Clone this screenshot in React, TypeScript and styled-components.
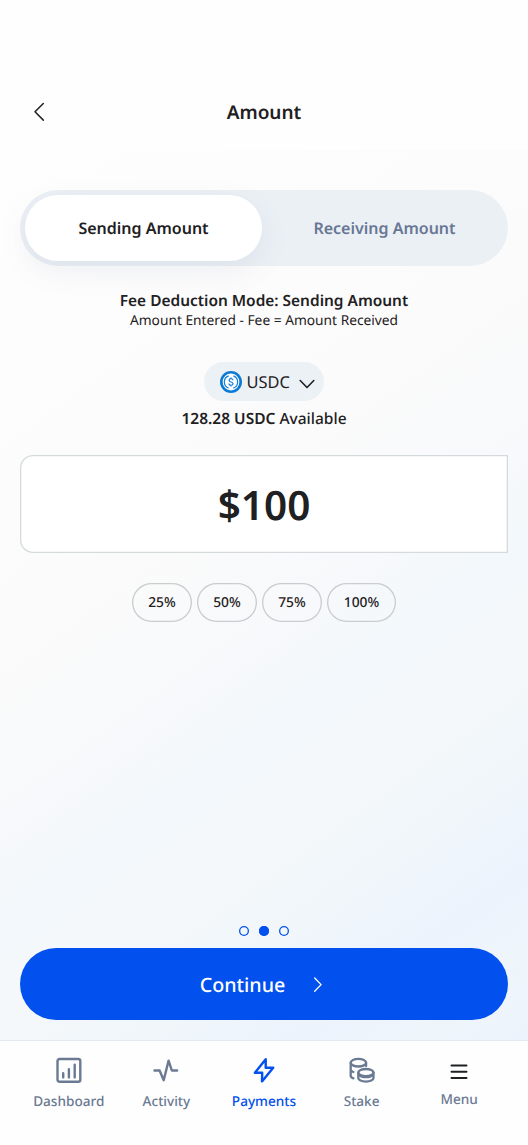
import React from "react";
import styled, { createGlobalStyle } from "styled-components";

const GlobalStyle = createGlobalStyle`
  * { box-sizing: border-box; }
  body { margin: 0; background: #fff; font-family: "Noto Sans", sans-serif; color: #1e2022; text-rendering: geometricPrecision; }
  button { font: inherit; color: inherit; background: none; border: 0; padding: 0; margin: 0; text-rendering: inherit; }
  svg { display: block; flex: none; }
`;

const Screen = styled.div`
  width: 528px;
  height: 1145px;
  display: flex;
  flex-direction: column;
  overflow: hidden;
  background: linear-gradient(144deg, #fefefe 12%, #fcfcfc 30%, #fbfbfb 42%, #f8f9fb 53%, #f2f8fc 61%, #f5f8fb 66%, #f0f6fa 75%, #ecf3fd 82%, #eef5fa 88%, #ebf2fd 95%);
`;

const Header = styled.header`
  height: 150px;
  padding: 73px 20px 0;
  display: grid;
  grid-template-columns: 40px 1fr 40px;
  align-items: center;
  background: #fefefe;
`;

const BackButton = styled.button`
  display: flex;
  padding-left: 13px;
`;

const Title = styled.h1`
  margin: 0;
  text-align: center;
  font-size: 19px;
  font-weight: 600;
  line-height: 26px;
`;

const Content = styled.main`
  flex: 1;
  display: flex;
  flex-direction: column;
  align-items: center;
  padding: 40px 20px 20px;
`;

const Segmented = styled.div`
  width: 100%;
  height: 76px;
  padding: 5px;
  display: grid;
  grid-template-columns: 1fr 1fr;
  gap: 4px;
  border-radius: 38px;
  background: #ebf0f5;
`;

const Segment = styled.button<{ $active?: boolean }>`
  height: 66px;
  border-radius: 33px;
  font-size: 16px;
  font-weight: 600;
  color: ${(p) => (p.$active ? "#1e2022" : "#687794")};
  background: ${(p) => (p.$active ? "#fff" : "transparent")};
  box-shadow: ${(p) => (p.$active ? "0 10px 30px rgba(92, 104, 148, 0.09)" : "none")};
`;

const ModeTitle = styled.p`
  margin: 24px 0 0;
  font-size: 15.45px;
  font-weight: 600;
  line-height: 20px;
`;

const ModeText = styled.p`
  margin: 1px 0 0;
  font-size: 13.75px;
  line-height: 20px;
`;

const CurrencyButton = styled.button`
  margin-top: 31px;
  width: 120px;
  height: 39px;
  padding: 0 9.5px 0 15.5px;
  display: flex;
  align-items: center;
  border-radius: 20px;
  background: #ebf1f5;
  font-size: 16.4px;
`;

const CurrencyName = styled.span`
  margin: 0 0 0 5px;
  flex: 1;
  text-align: left;
`;

const Chevron = styled.svg`
  margin-top: 4px;
`;

const Available = styled.p`
  margin: 6px 0 1px;
  font-size: 15.5px;
  font-weight: 500;
  line-height: 22px;
  b { font-weight: 600; }
`;

const AmountField = styled.div`
  margin-top: 25px;
  width: 100%;
  height: 98px;
  display: flex;
  align-items: center;
  justify-content: center;
  border-radius: 13px 0 0 13px;
  background: #fff;
  box-shadow: inset 0 0 0 1.3px #d5dadc;
  font-size: 40.5px;
  font-weight: 600;
`;

const Chips = styled.div`
  margin-top: 30px;
  display: flex;
  gap: 5px;
`;

const Chip = styled.button<{ $width: number }>`
  width: ${(p) => p.$width}px;
  height: 39px;
  border-radius: 20px;
  box-shadow: inset 0 0 0 1.3px #c9cdcf;
  font-size: 13.8px;
  font-weight: 500;
`;

const Dots = styled.div`
  margin-top: auto;
  display: flex;
  gap: 9.6px;
`;

const Dot = styled.span<{ $active?: boolean }>`
  width: 10px;
  height: 10px;
  box-shadow: inset 0 0 0 1.3px #0250ee;
  border-radius: 50%;
  background: ${(p) => (p.$active ? "#0250ee" : "transparent")};
`;

const ContinueButton = styled.button`
  margin-top: 12px;
  width: 100%;
  height: 72px;
  display: flex;
  align-items: center;
  justify-content: center;
  gap: 28px;
  padding-right: 5px;
  border-radius: 36px;
  background: #0250ee;
  color: #fff;
  font-size: 19.7px;
  font-weight: 500;
`;

const Nav = styled.nav`
  height: 105px;
  padding: 16px 20px 0;
  display: grid;
  grid-template-columns: repeat(5, 1fr);
  border-top: 1px solid #e2e8ee;
  background: #fefefe;
`;

const NavItem = styled.a<{ $active?: boolean }>`
  display: flex;
  flex-direction: column;
  align-items: center;
  font-size: 13.6px;
  font-weight: 500;
  line-height: 20px;
  color: ${(p) => (p.$active ? "#0250ee" : "#6b7a93")};
`;

const NavIcon = styled.span<{ $compact?: boolean }>`
  height: ${(p) => (p.$compact ? 32 : 34)}px;
`;

const line = {
  fill: "none",
  stroke: "currentColor",
  strokeLinecap: "round" as const,
  strokeLinejoin: "round" as const,
};

const UsdcIcon = () => (
  <svg width="22" height="22" viewBox="0 0 22 22">
    <circle cx="11" cy="11" r="11" fill="#0b7ad6" />
    <circle cx="11" cy="11" r="8.4" fill="#fff" />
    <g fill="none" stroke="#1580d8" strokeWidth="1.25">
      <path d="M8.6 4.9a6.5 6.5 0 0 0 0 12.2M13.4 4.9a6.5 6.5 0 0 1 0 12.2" />
      <path d="M12.9 9.3c0-1-.8-1.6-1.9-1.6s-1.9.6-1.9 1.5c0 2.3 3.9 1.3 3.9 3.6 0 .9-.9 1.5-2 1.5s-2-.6-2-1.7M11 6.4v1.4M11 14.2v1.4" />
    </g>
  </svg>
);

const DashboardIcon = () => (
  <svg width="26" height="26" viewBox="0 0 26 26" {...line} strokeWidth="2.4">
    <rect x="1.5" y="2" width="22.8" height="22.8" rx="2" />
    <path d="M7.2 16.3v4.1M12.9 12.2v8.2M18.7 7.8v12.6" />
  </svg>
);

const ActivityIcon = () => (
  <svg width="26" height="26" viewBox="0 0 26 26" {...line} strokeWidth="2.4">
    <path d="M1.5 13.5h5.1l4.1 9.7 4.9-19.6 3.2 9.9h5.3" />
  </svg>
);

const PaymentsIcon = () => (
  <svg width="26" height="26" viewBox="0 0 26 26" {...line} strokeWidth="2.4">
    <path d="M14.7 2.3 3.9 15.8h7.3l-.2 8.6L22.2 10.7h-7.5z" />
  </svg>
);

const StakeIcon = () => (
  <svg width="26" height="26" viewBox="0 0 26 26" {...line} strokeWidth="2.3">
    <ellipse cx="9.4" cy="5.7" rx="7.7" ry="3.8" />
    <path d="M1.7 5.7v13c0 1.3 1 2.1 2.7 2.7M1.7 12.3c0 1.2.9 2.1 2.7 2.7M17.1 5.7v3.4" />
    <ellipse cx="16.9" cy="15.6" rx="7.6" ry="3.6" />
    <path d="M9.3 15.6v5.4c0 2 3.3 3.6 7.6 3.6s7.6-1.6 7.6-3.6v-5.4" />
    <path d="M10 18.4c1.2 1.4 3.8 2.2 6.9 2.2s5.7-.8 6.9-2.2" strokeWidth="1.5" />
  </svg>
);

const MenuIcon = () => (
  <svg width="26" height="30" viewBox="0 0 26 30" {...line} stroke="#1e2022" strokeWidth="2">
    <path d="M5.5 8.4h15M5.5 14.8h15M5.5 21h15" />
  </svg>
);

const navItems = [
  { label: "Dashboard", Icon: DashboardIcon },
  { label: "Activity", Icon: ActivityIcon },
  { label: "Payments", Icon: PaymentsIcon, active: true },
  { label: "Stake", Icon: StakeIcon },
  { label: "Menu", Icon: MenuIcon, compact: true },
];

const shares = [
  { label: "25%", width: 60 },
  { label: "50%", width: 60 },
  { label: "75%", width: 60 },
  { label: "100%", width: 69 },
];

export default function App() {
  return (
    <Screen>
      <GlobalStyle />
      <Header>
        <BackButton aria-label="Back">
          <svg width="12" height="20" viewBox="0 0 12 20" {...line} strokeWidth="1.5">
            <path d="M10.3 1.5 2 9.8l8.3 8.3" />
          </svg>
        </BackButton>
        <Title>Amount</Title>
      </Header>
      <Content>
        <Segmented>
          <Segment $active>Sending Amount</Segment>
          <Segment>Receiving Amount</Segment>
        </Segmented>
        <ModeTitle>Fee Deduction Mode: Sending Amount</ModeTitle>
        <ModeText>Amount Entered - Fee = Amount Received</ModeText>
        <CurrencyButton>
          <UsdcIcon />
          <CurrencyName>USDC</CurrencyName>
          <Chevron width="16" height="10" viewBox="0 0 16 10" {...line} strokeWidth="1.6">
            <path d="m1.2 1.5 6.8 7 6.8-7" />
          </Chevron>
        </CurrencyButton>
        <Available>
          <b>128.28 USDC</b> Available
        </Available>
        <AmountField>$100</AmountField>
        <Chips>
          {shares.map((s) => (
            <Chip key={s.label} $width={s.width}>
              {s.label}
            </Chip>
          ))}
        </Chips>
        <Dots>
          <Dot />
          <Dot $active />
          <Dot />
        </Dots>
        <ContinueButton>
          Continue
          <svg width="10" height="16" viewBox="0 0 10 16" {...line} strokeWidth="1.3">
            <path d="m1.7 2 6.4 6.6-6.4 6.6" />
          </svg>
        </ContinueButton>
      </Content>
      <Nav>
        {navItems.map(({ label, Icon, active, compact }) => (
          <NavItem key={label} $active={active}>
            <NavIcon $compact={compact}>
              <Icon />
            </NavIcon>
            {label}
          </NavItem>
        ))}
      </Nav>
    </Screen>
  );
}
